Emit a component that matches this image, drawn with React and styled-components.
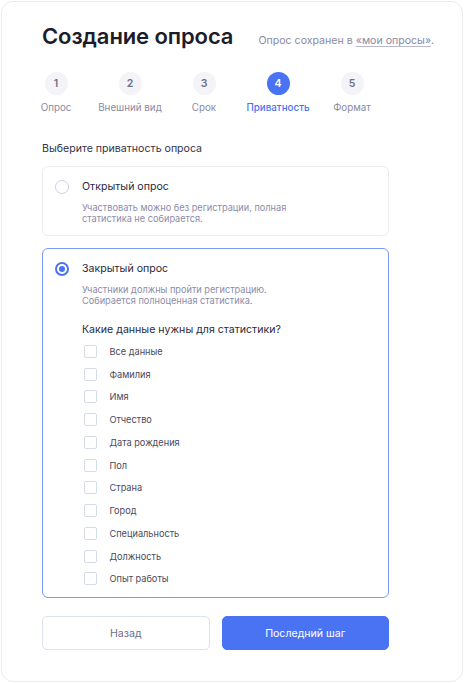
import React from 'react';
import styled, { createGlobalStyle } from 'styled-components';

const GlobalStyle = createGlobalStyle`
  html, body {
    margin: 0;
    padding: 0;
    background: #ffffff;
  }
  body {
    font-family: Inter, "Noto Sans", sans-serif;
    -webkit-font-smoothing: antialiased;
  }
`;

const Card = styled.div`
  box-sizing: border-box;
  margin: 1px;
  width: 462px;
  height: 681px;
  border: 1px solid #ececf1;
  border-radius: 12px;
  padding: 20px 0 0 40px;
  background: #fff;
`;

const Header = styled.div`
  display: flex;
  align-items: baseline;
  gap: 25px;
`;

const Title = styled.h1`
  margin: 0;
  font-size: 22px;
  line-height: 28px;
  font-weight: 600;
  color: #1c1c2b;
  letter-spacing: -0.1px;
`;

const Note = styled.span`
  font-size: 10.6px;
  color: #8a8aa6;
  white-space: nowrap;

  a {
    color: #8a8aa6;
    text-decoration: underline;
    text-underline-offset: 2px;
    text-decoration-color: #b9b9cc;
  }
`;

const Steps = styled.div`
  display: flex;
  gap: 46px;
  margin-top: 22px;
`;

const Step = styled.div`
  width: 28px;
  display: flex;
  flex-direction: column;
  align-items: center;
  gap: 6px;
`;

const StepNum = styled.div`
  width: 23px;
  height: 23px;
  border-radius: 50%;
  display: flex;
  align-items: center;
  justify-content: center;
  font-size: 10.5px;
  font-weight: 600;
  background: ${(p) => (p.$active ? '#4a73f4' : '#f3f3f8')};
  color: ${(p) => (p.$active ? '#ffffff' : '#6f6f88')};
`;

const StepLabel = styled.div`
  font-size: 9.8px;
  line-height: 13px;
  white-space: nowrap;
  color: ${(p) => (p.$active ? '#4a73f4' : '#8a8aa3')};
  font-weight: ${(p) => (p.$active ? 500 : 400)};
`;

const SectionLabel = styled.div`
  margin-top: 27px;
  font-size: 10.6px;
  line-height: 15px;
  color: #33334a;
`;

const Options = styled.div`
  width: 347px;
  margin-top: 10px;
  display: flex;
  flex-direction: column;
  gap: 12px;
`;

const Option = styled.div`
  box-sizing: border-box;
  border: 1px solid ${(p) => (p.$selected ? '#7b98f4' : '#ececf2')};
  border-radius: 6px;
  padding: 13px 12px ${(p) => (p.$selected ? '7px' : '11px')};
  display: grid;
  grid-template-columns: 14px 1fr;
  column-gap: 13px;
`;

const Radio = styled.div`
  box-sizing: border-box;
  width: 14px;
  height: 14px;
  border-radius: 50%;
  border: ${(p) => (p.$checked ? '2px solid #4a73f4' : '1.5px solid #cbd1e8')};
  display: flex;
  align-items: center;
  justify-content: center;

  &::after {
    content: '';
    display: ${(p) => (p.$checked ? 'block' : 'none')};
    width: 6px;
    height: 6px;
    border-radius: 50%;
    background: #4a73f4;
  }
`;

const OptionBody = styled.div`
  display: flex;
  flex-direction: column;
`;

const OptionTitle = styled.div`
  font-size: 10.6px;
  line-height: 14px;
  color: #2a2a3c;
`;

const OptionDesc = styled.div`
  margin-top: 8px;
  font-size: 9.2px;
  line-height: 11px;
  color: #8c8cab;
`;

const Question = styled.div`
  margin-top: 16px;
  font-size: 10.6px;
  line-height: 15px;
  color: #2a2a3c;
`;

const Checks = styled.div`
  margin-top: 3px;
  display: flex;
  flex-direction: column;
`;

const CheckRow = styled.label`
  height: 22.75px;
  display: flex;
  align-items: center;
  gap: 13px;
  padding-left: 1.5px;
  font-size: 9.2px;
  color: #4a4a5c;
`;

const Box = styled.span`
  box-sizing: border-box;
  width: 13px;
  height: 13px;
  border: 1.5px solid #d6dbea;
  border-radius: 2px;
  background: #fff;
`;

const Buttons = styled.div`
  width: 347px;
  margin-top: 18px;
  display: grid;
  grid-template-columns: 1fr 1fr;
  gap: 12px;
`;

const Button = styled.button`
  box-sizing: border-box;
  height: 34px;
  border-radius: 5px;
  font-family: inherit;
  font-size: 10.6px;
  cursor: pointer;
  border: 1px solid ${(p) => (p.$primary ? '#4a73f4' : '#dde2ef')};
  background: ${(p) => (p.$primary ? '#4a73f4' : '#ffffff')};
  color: ${(p) => (p.$primary ? '#ffffff' : '#6f6f88')};
`;

const steps = ['Опрос', 'Внешний вид', 'Срок', 'Приватность', 'Формат'];
const fields = [
  'Все данные',
  'Фамилия',
  'Имя',
  'Отчество',
  'Дата рождения',
  'Пол',
  'Страна',
  'Город',
  'Специальность',
  'Должность',
  'Опыт работы',
];

export default function App() {
  const current = 3;
  return (
    <>
      <GlobalStyle />
      <Card>
        <Header>
          <Title>Создание опроса</Title>
          <Note>
            Опрос сохранен в <a href="#">«мои опросы»</a>.
          </Note>
        </Header>

        <Steps>
          {steps.map((label, i) => (
            <Step key={label}>
              <StepNum $active={i === current}>{i + 1}</StepNum>
              <StepLabel $active={i === current}>{label}</StepLabel>
            </Step>
          ))}
        </Steps>

        <SectionLabel>Выберите приватность опроса</SectionLabel>

        <Options>
          <Option>
            <Radio />
            <OptionBody>
              <OptionTitle>Открытый опрос</OptionTitle>
              <OptionDesc>
                Участвовать можно без регистрации, полная
                <br />
                статистика не собирается.
              </OptionDesc>
            </OptionBody>
          </Option>

          <Option $selected>
            <Radio $checked />
            <OptionBody>
              <OptionTitle>Закрытый опрос</OptionTitle>
              <OptionDesc>
                Участники должны пройти регистрацию.
                <br />
                Собирается полноценная статистика.
              </OptionDesc>
              <Question>Какие данные нужны для статистики?</Question>
              <Checks>
                {fields.map((f) => (
                  <CheckRow key={f}>
                    <Box />
                    {f}
                  </CheckRow>
                ))}
              </Checks>
            </OptionBody>
          </Option>
        </Options>

        <Buttons>
          <Button>Назад</Button>
          <Button $primary>Последний шаг</Button>
        </Buttons>
      </Card>
    </>
  );
}
